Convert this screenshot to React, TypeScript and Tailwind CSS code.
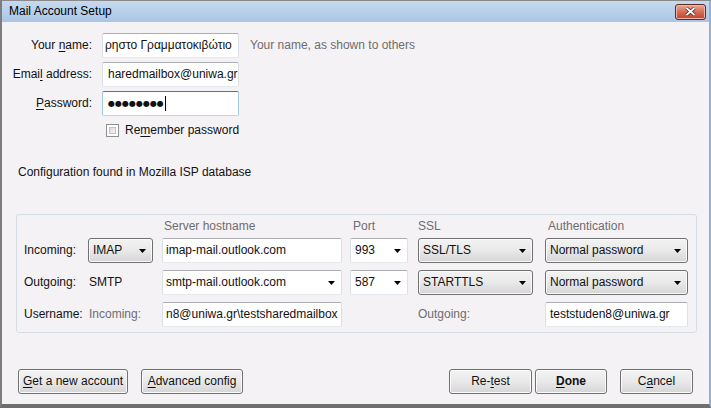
import React from "react";

function Arrow() {
  return (
    <svg width="7" height="4" viewBox="0 0 7 4" className="shrink-0">
      <path d="M0 0H7L3.5 4Z" fill="#000" />
    </svg>
  );
}

function U({ children }: { children: React.ReactNode }) {
  return <span className="underline underline-offset-2 decoration-1">{children}</span>;
}

const inputBox =
  "flex items-center bg-white border border-t-[#abadb3] border-x-[#dbdfe6] border-b-[#e3e9ef] rounded-[2px] overflow-hidden whitespace-nowrap";
const selectBtn =
  "flex items-center justify-between rounded-[3px] border border-[#707070] bg-linear-to-b from-[#f3f3f3] via-[#e9e9e9] to-[#d5d5d5] shadow-[inset_0_0_0_1px_#fbfbfb] pl-[4px] pr-[6px]";
const button =
  "flex items-center justify-center h-full rounded-[3px] border border-[#707070] bg-linear-to-b from-[#f3f3f3] via-[#e9e9e9] to-[#d5d5d5] shadow-[inset_0_0_0_1px_#fbfbfb]";

function TopRow({ label, children, hint }: { label: React.ReactNode; children: React.ReactNode; hint?: string }) {
  return (
    <div className="flex items-center h-[25px]">
      <div className="w-[90px] text-right">{label}</div>
      <div className="ml-[10px] w-[137px] h-full">{children}</div>
      {hint && <div className="ml-[11px] text-[#6d6d6d]">{hint}</div>}
    </div>
  );
}

export default function App() {
  return (
    <div className="w-[711px] h-[408px] flex flex-col bg-[#f5f2f6] border-l-2 border-l-[#7d7d7d] border-t border-t-[#8a8a8a] border-r-2 border-r-[#97b0cf] border-b-4 border-b-[#6e6e6e] text-[12px] text-[#111] font-['Liberation_Sans',Arial,sans-serif] leading-[15px]">
      {/* title bar */}
      <div className="h-[21px] flex items-center justify-between pl-[7px] pr-[3px] bg-linear-to-b from-[#c6daee] to-[#a9c6e7]">
        <span className="text-black">Mail Account Setup</span>
        <div className="w-[31px] h-[16px] rounded-[3px] border border-[#5b2a24] bg-linear-to-b from-[#e9a898] via-[#d66b55] to-[#c2402a] flex items-center justify-center shadow-[inset_0_0_0_1px_#f0b8a8]">
          <svg width="11" height="9" viewBox="0 0 11 9">
            <path d="M1.5 1L9.5 8M9.5 1L1.5 8" stroke="#3a1a14" strokeWidth="3.2" />
            <path d="M1.5 1L9.5 8M9.5 1L1.5 8" stroke="#fff" strokeWidth="1.8" />
          </svg>
        </div>
      </div>

      <div className="flex-1 flex flex-col pt-[11px]">
        <TopRow label={<>Your <U>n</U>ame:</>} hint="Your name, as shown to others">
          <div className={`${inputBox} h-full pl-[2px]`}>ρηστο Γραμματοκιβώτιο</div>
        </TopRow>
        <div className="mt-[4px]">
          <TopRow label={<>Emai<U>l</U> address:</>}>
            <div className={`${inputBox} h-full pl-[5px]`}>haredmailbox@uniwa.gr</div>
          </TopRow>
        </div>
        <div className="mt-[4px]">
          <TopRow label={<><U>P</U>assword:</>}>
            <div className="flex items-center h-full bg-white border border-t-[#3d7bad] border-x-[#a4c9e3] border-b-[#b7d9ed] rounded-[2px] pl-[5px]">
              <span className="font-['DejaVu_Sans',sans-serif] text-[8px] leading-[10px]">●●●●●●●●</span>
              <span className="ml-[1px] w-[1px] h-[15px] bg-black" />
            </div>
          </TopRow>
        </div>

        <div className="mt-[8px] flex items-center h-[13px] pl-[104px]">
          <div className="w-[13px] h-[13px] border border-[#8e8f8f] bg-white p-[2px]">
            <div className="w-full h-full border border-[#c2c2c2] bg-linear-to-br from-[#d9d9d9] to-[#f7f7f7]" />
          </div>
          <span className="ml-[6px]">Re<U>m</U>ember password</span>
        </div>

        <div className="mt-[28px] pl-[16px]">Configuration found in Mozilla ISP database</div>

        {/* server settings group */}
        <div className="mt-[34px] ml-[14px] w-[681px] border border-[#d5dce4] rounded-[3px] pl-[7px] pb-[5px]">
          <div className="flex items-center h-[23px] text-[#6d6d6d]">
            <div className="w-[139px]" />
            <div className="w-[188px] pl-[1px]">Server hostname</div>
            <div className="w-[67px] pl-[2px]">Port</div>
            <div className="w-[129px]">SSL</div>
            <div className="pl-[1px]">Authentication</div>
          </div>

          <div className="flex items-center h-[25px]">
            <div className="w-[64px]">Incoming:</div>
            <div className={`${selectBtn} w-[65px] h-full`}>
              <span>IMAP</span>
              <Arrow />
            </div>
            <div className={`${inputBox} ml-[9px] w-[180px] h-full pl-[3px]`}>imap-mail.outlook.com</div>
            <div className={`${inputBox} ml-[8px] w-[58px] h-full pl-[4px] pr-[6px] justify-between`}>
              <span>993</span>
              <Arrow />
            </div>
            <div className={`${selectBtn} ml-[10px] w-[115px] h-full`}>
              <span>SSL/TLS</span>
              <Arrow />
            </div>
            <div className={`${selectBtn} ml-[12px] w-[143px] h-full`}>
              <span>Normal password</span>
              <Arrow />
            </div>
          </div>

          <div className="flex items-center h-[25px] mt-[7px]">
            <div className="w-[64px]">Outgoing:</div>
            <div className="w-[74px] pl-[1px]">SMTP</div>
            <div className={`${inputBox} w-[180px] h-full pl-[3px] pr-[6px] justify-between`}>
              <span>smtp-mail.outlook.com</span>
              <Arrow />
            </div>
            <div className={`${inputBox} ml-[8px] w-[58px] h-full pl-[4px] pr-[6px] justify-between`}>
              <span>587</span>
              <Arrow />
            </div>
            <div className={`${selectBtn} ml-[10px] w-[115px] h-full`}>
              <span>STARTTLS</span>
              <Arrow />
            </div>
            <div className={`${selectBtn} ml-[12px] w-[143px] h-full`}>
              <span>Normal password</span>
              <Arrow />
            </div>
          </div>

          <div className="flex items-center h-[25px] mt-[7px]">
            <div className="w-[64px]">Username:</div>
            <div className="w-[74px] pl-[1px] text-[#6d6d6d]">Incoming:</div>
            <div className={`${inputBox} w-[180px] h-full pl-[3px]`}>n8@uniwa.gr\testsharedmailbox</div>
            <div className="ml-[8px] w-[58px]" />
            <div className="ml-[10px] w-[115px] text-[#6d6d6d]">Outgoing:</div>
            <div className={`${inputBox} ml-[12px] w-[143px] h-full pl-[4px]`}>teststuden8@uniwa.gr</div>
          </div>
        </div>

        {/* buttons */}
        <div className="mt-[36px] h-[25px] flex px-[16px]">
          <div className={`${button} w-[110px]`}><span><U>G</U>et a new account</span></div>
          <div className={`${button} ml-[13px] w-[102px]`}><span><U>A</U>dvanced config</span></div>
          <div className={`${button} ml-auto w-[83px]`}><span>Re-<U>t</U>est</span></div>
          <div className={`${button} ml-[3px] w-[72px] border-[#4a4a4a] font-bold`}><span><U>D</U>one</span></div>
          <div className={`${button} ml-[13px] w-[73px]`}><span>C<U>a</U>ncel</span></div>
        </div>
      </div>
    </div>
  );
}
